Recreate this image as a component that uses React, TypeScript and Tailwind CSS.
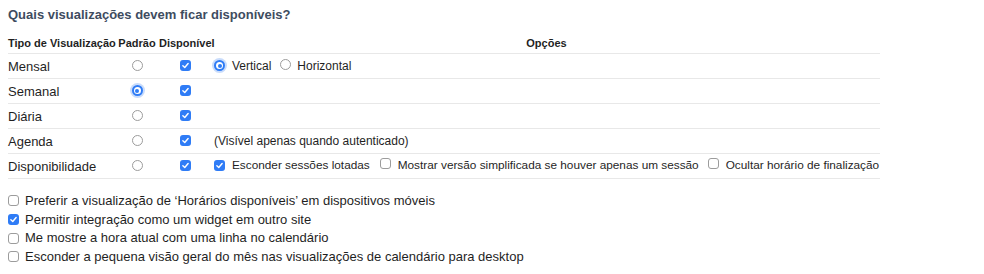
import React from 'react';

const BLUE = 'bg-[#2f7cf6]';

const Check: React.FC<{ checked?: boolean }> = ({ checked }) =>
  checked ? (
    <span className={`inline-flex h-[11px] w-[11px] shrink-0 items-center justify-center rounded-[3px] ${BLUE}`}>
      <svg viewBox="0 0 12 12" className="h-[9px] w-[9px]" fill="none">
        <path d="M2.5 6.3 L5 8.6 L9.5 3.3" stroke="white" strokeWidth="1.9" strokeLinecap="round" strokeLinejoin="round" />
      </svg>
    </span>
  ) : (
    <span className="inline-block h-[11px] w-[11px] shrink-0 rounded-[3px] border border-[#9c9c9c] bg-white" />
  );

const Radio: React.FC<{ checked?: boolean }> = ({ checked }) =>
  checked ? (
    <span className={`inline-flex h-[11px] w-[11px] shrink-0 items-center justify-center rounded-full ${BLUE} ring-2 ring-[#c9dcfb]`}>
      <span className="flex h-[7px] w-[7px] items-center justify-center rounded-full bg-white">
        <span className={`h-[4px] w-[4px] rounded-full ${BLUE}`} />
      </span>
    </span>
  ) : (
    <span className="inline-block h-[11px] w-[11px] shrink-0 rounded-full border border-[#9c9c9c] bg-white" />
  );

type Row = { label: string; padrao?: boolean; options?: React.ReactNode };

const rows: Row[] = [
  {
    label: 'Mensal',
    options: (
      <div className="flex items-center">
        <Radio checked />
        <span className="ml-[7px]">Vertical</span>
        <span className="ml-[9px]"><Radio /></span>
        <span className="ml-[6px]">Horizontal</span>
      </div>
    ),
  },
  { label: 'Semanal', padrao: true },
  { label: 'Diária' },
  { label: 'Agenda', options: <span>(Visível apenas quando autenticado)</span> },
  {
    label: 'Disponibilidade',
    options: (
      <div className="flex items-center whitespace-nowrap text-[11.8px]">
        <Check checked />
        <span className="ml-[7px]">Esconder sessões lotadas</span>
        <span className="ml-[10px]"><Check /></span>
        <span className="ml-[7px]">Mostrar versão simplificada se houver apenas um sessão</span>
        <span className="ml-[9px]"><Check /></span>
        <span className="ml-[7px]">Ocultar horário de finalização</span>
      </div>
    ),
  },
];

const extras = [
  { label: 'Preferir a visualização de ‘Horários disponíveis’ em dispositivos móveis', checked: false },
  { label: 'Permitir integração como um widget em outro site', checked: true },
  { label: 'Me mostre a hora atual com uma linha no calendário', checked: false },
  { label: 'Esconder a pequena visão geral do mês nas visualizações de calendário para desktop', checked: false },
];

export default function App() {
  return (
    <div className="h-[274px] w-[984px] bg-white px-2 pt-[7px] font-['Liberation_Sans',Arial,sans-serif] text-[#1f1f1f]">
      <h3 className="text-[13px] font-bold leading-4 text-[#3e4c5f]">Quais visualizações devem ficar disponíveis?</h3>

      <table className="mt-[11px] w-[872px] table-fixed border-collapse">
        <colgroup>
          <col className="w-[110px]" />
          <col className="w-[38px]" />
          <col className="w-[57px]" />
          <col />
        </colgroup>
        <thead>
          <tr className="h-[19px] border-b border-[#e8e8e8] text-[11px] font-bold">
            <th className="whitespace-nowrap p-0 text-left">Tipo de Visualização</th>
            <th className="whitespace-nowrap p-0 text-center">Padrão</th>
            <th className="whitespace-nowrap p-0 pl-[3px] text-center">Disponível</th>
            <th className="p-0 text-center">Opções</th>
          </tr>
        </thead>
        <tbody>
          {rows.map(r => (
            <tr key={r.label} className="h-[25px] border-b border-[#e8e8e8]">
              <td className="p-0 pt-[2px] text-[13px]">{r.label}</td>
              <td className="p-0">
                <div className="flex justify-center"><Radio checked={r.padrao} /></div>
              </td>
              <td className="p-0">
                <div className="flex justify-center pl-[2px]"><Check checked /></div>
              </td>
              <td className="p-0 pl-[1px] text-[12px]">{r.options}</td>
            </tr>
          ))}
        </tbody>
      </table>

      <div className="mt-[13px] flex flex-col">
        {extras.map(e => (
          <div key={e.label} className="flex h-[18.7px] items-center text-[13px]">
            <Check checked={e.checked} />
            <span className="ml-[6px]">{e.label}</span>
          </div>
        ))}
      </div>
    </div>
  );
}
